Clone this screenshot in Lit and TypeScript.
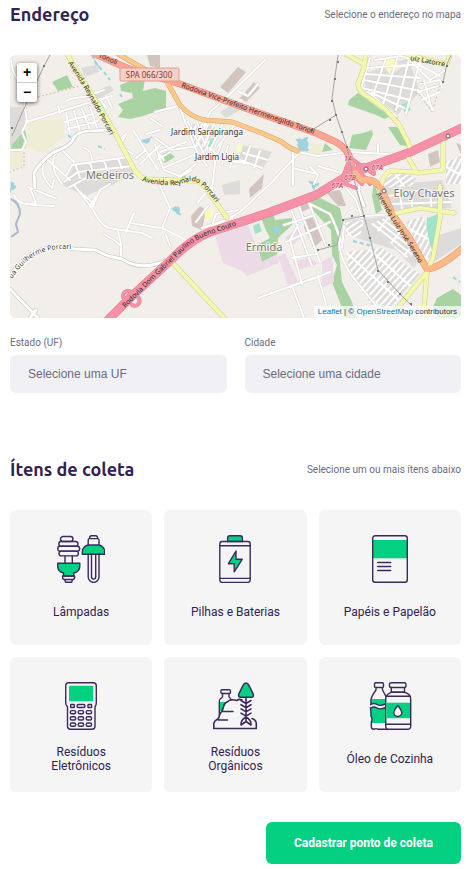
import { LitElement, html, svg, css } from "lit";
import { customElement, state } from "lit/decorators.js";
import { classMap } from "lit/directives/class-map.js";

type Shape = { kind: string; d: string };

const streets: Shape[] = [
  { kind: "street", d: "M26 122L62 111L88 103L112 96M66 101Q74 97 84 97L104 90M58 106L60 113" },
  { kind: "street", d: "M66 113L70 134M74 111L80 132M82 109L90 130M90 107L97 128M64 122L93 114M68 129L98 121M106 96L112 108M100 99L106 108" },
  { kind: "street", d: "M11 60Q12 72 18 80L24 100L27 122L22 132L26 142L22 150L10 150" },
  { kind: "street", d: "M48 157Q36 170 50 186M56 153Q48 166 62 184M48 160L70 180M62 150L74 162M84 148Q92 150 92 160M74 140L78 132" },
  { kind: "street", d: "M66 176L72 165L128 157M64 182L78 172L133 166M68 188L86 178M76 166L80 178M90 163L96 180M104 161L108 172M118 159L122 168M30 188L36 203L30 204M28 187L55 198M28 204Q18 204 14 195M32 205L54 206M52 188L54 180" },
  { kind: "street", d: "M116 143L126 134L120 146L133 154M133 130L158 170M146 150L136 158M150 118L162 126M140 164L160 145M146 134L160 130M158 153L164 160" },
  { kind: "street", d: "M155 112L178 106M180 108L196 150L207 166M188 122L206 158M197 122L204 142M206 124L196 146M214 124L204 146M222 125L210 150M218 146L237 122M216 154L212 190L225 218M155 138L172 150L197 146M160 152L186 142M155 145L163 168L196 154M157 160L170 152M164 170L180 176L196 164M178 178L192 170" },
  { kind: "street", d: "M265 60L226 98M238 91L248 96L258 84M210 148L222 160L252 164M222 142L216 158M228 146L222 164M234 152L230 168M243 153L268 160M240 160L262 168M250 146L244 164M260 151L254 168" },
  { kind: "street", d: "M160 186L170 208L162 228L190 242M166 235L170 246M155 264L172 258M198 202L212 186M196 236L222 222L240 212L270 184L300 152M208 236L216 214L238 210M196 222L208 206M202 228L232 218M226 98L210 112L204 126" },
  { kind: "street", d: "M74 185L92 208Q100 224 108 228L142 233L152 238M92 208L100 190L110 184M80 192L94 204M90 206L96 196M118 231L121 244L121 258M104 234L114 240L121 246M126 232L134 213M131 223L160 228" },
  { kind: "street", d: "M298 152L318 156L350 152L404 155M293 152L293 185M293 168L317 174M338 172L318 166M378 145L378 153M310 167L318 175L314 184" },
  { kind: "street", d: "M375 60L414 54M368 68L420 64M366 74L420 78M364 80L416 90M362 88L410 100M372 93L404 108M370 58L360 92M386 58L372 98M398 56L383 104M410 56L396 110M420 60L406 114M368 92L396 116M405 56L430 80L446 70M418 90L434 110M420 84L440 80L442 88M418 92L438 86M422 100L440 92M414 62L440 76M424 80L432 110" },
  { kind: "street", d: "M284 225L312 216M258 298L314 278M298 225L290 240L302 284M290 206L312 266M298 204L320 262M308 200L326 246M292 286L304 318M292 258L316 254M286 242L330 222M310 280L330 272M318 276L330 318M310 204L330 214Q336 226 342 244M346 188L356 200L362 218" },
  { kind: "street", d: "M344 220L366 216L392 214M340 236Q336 252 352 276L386 318M344 226L342 248M430 190L432 212M400 190L402 210M412 196L412 208M388 196L422 190M390 204L452 202" },
];

const localRoads: Shape[] = [
  { kind: "local", d: "M35 188L34 173Q40 162 54 152Q72 146 74 137Q80 130 95 131L114 129" },
  { kind: "local", d: "M63 247L74 249L95 250L108 256L122 259Q138 270 160 263L172 259" },
  { kind: "local", d: "M10 276Q24 254 46 248L63 247M10 289L38 318M30 318L36 310" },
  { kind: "local", d: "M362 176L358 190L364 206" },
];

const mainRoads: Shape[] = [
  { kind: "yellow", d: "M67 54L84 82L100 107L115 133L133 167Q138 177 146 179L196 181Q205 184 210 194L227 218" },
  { kind: "yellow", d: "M172 262L226 320" },
  { kind: "yellow", d: "M366 54L364 68L358 84Q358 92 370 98L384 108L398 123L408 142L411 150L406 154L417 173L443 170L443 143M346 54L362 63" },
  { kind: "yellow", d: "M380 190Q382 176 390 171L416 172" },
  { kind: "yellow", d: "M400 52Q424 60 447 64L450 54" },
  { kind: "yellow", d: "M392 214L420 208L454 213M440 186L440 218L433 258L427 272L388 320M427 272L423 320" },
  { kind: "orange", d: "M118 54L146 70M167 82L180 105Q190 117 205 120L232 122L262 133L282 142Q290 149 298 151" },
  { kind: "trunk", d: "M95 54L127 68L180 84L245 108L316 133L336 142Q350 150 351 164L355 177" },
  { kind: "motorway", d: "M106 322L133 295L172 259Q190 240 210 232L268 213L316 195L352 173L408 153L464 127" },
  { kind: "ramp", d: "M342 180L350 158L374 174M344 183Q362 170 370 184M350 166L366 178M340 182L356 188M358 166Q370 163 374 172M346 168L362 184M342 176L360 168" },
  { kind: "ramp", d: "M124 299a5 5 0 1 1 9 -3a5 5 0 1 1 -1 9" },
  { kind: "primary", d: "M355 173L362 180Q376 178 382 190L392 214L408 236L427 269Q440 268 464 247" },
];

const areas: Shape[] = [
  { kind: "wood", d: "M52 82L67 75L73 87L58 91ZM120 85L133 80L145 79L143 91L155 88L166 91L166 110L155 112L143 116L130 119L118 117L123 110L118 104L133 98L132 93L121 91ZM13 130L25 130L27 138L23 143L26 148L11 150Z" },
  { kind: "wood", d: "M158 157L168 151L175 157L165 163ZM349 100L358 93L390 116L385 119L376 115L348 105ZM388 127L397 127L412 147L400 145ZM349 148L352 135L363 133L372 130L373 134L366 150ZM322 152L325 143L333 150Z" },
  { kind: "wood", d: "M260 215L273 213L275 220L292 218L292 225L278 238L277 255L262 262L257 245L270 238L265 228ZM310 202L320 198L340 208L342 218L338 245L342 282L352 302L357 318L346 318L332 282L337 265L332 255L331 230L310 207ZM433 307L437 298L453 289L461 295V318H438Z" },
  { kind: "wood", d: "M374 180L382 210L376 214L372 196Z" },
  { kind: "farm", d: "M28 122L62 118L65 135L45 153L26 147ZM10 151L24 152L22 166L10 170ZM310 142L324 146L320 156L310 154Z" },
  { kind: "housing", d: "M81 68L97 65L99 72L85 77ZM85 97L110 85L114 90L97 100ZM10 107H25V130L10 147ZM220 112L232 105L240 110L226 118ZM62 185L74 166L130 157L136 172L112 185L86 196ZM243 145L272 152L262 170L238 160ZM345 221L392 216L424 248L414 268L396 250L350 236ZM376 186L442 180L452 208L392 212ZM436 236L461 228V244L434 262ZM222 185L240 180V194L224 195ZM364 74L408 58L420 92L398 114L366 90Z" },
  { kind: "industry", d: "M215 235L247 223L258 250L262 262L277 254L279 263L247 276L242 271L223 263ZM278 257L285 253L298 282L288 285ZM285 238L297 228L302 236L292 246ZM293 262L310 257L318 264L298 270ZM322 262L332 256L334 282L322 288Z" },
  { kind: "building", d: "M220 87L238 67L246 72L228 93ZM240 98L254 82L260 88L246 102ZM249 189L264 174L262 188L250 198ZM147 55H160V68L150 66ZM191 216L200 206L206 210L202 230L192 226ZM428 154L438 150L440 162L430 167ZM456 143L461 145V154ZM300 204L306 202L310 208L302 212ZM304 218L312 216L322 240L314 248L304 228ZM326 192L340 190L346 206L338 206ZM181 173L186 172V178H181Z" },
  { kind: "park", d: "M382 63L393 57L401 67L390 75ZM204 212L212 208L214 216L206 222ZM237 145L242 145V152L236 152Z" },
  { kind: "teal", d: "M401 105L407 102L411 110L405 113ZM253 226L259 223L262 231L255 234ZM208 140L215 137L214 147L206 147ZM427 218L438 214L434 252L426 240Z" },
  { kind: "water", d: "M92 55L96 64L102 70M104 72L110 80M120 94L122 97M68 135L72 139M98 146L105 149M142 140L146 144L152 137M11 182L16 186L10 192M297 140L307 138L308 150L300 152ZM310 182L318 184L314 189ZM353 241L372 246M390 260L402 273L404 268M453 277L460 282M173 209L178 206L180 214L175 212ZM274 229L280 226V231L276 234Z" },
];

const gridPatterns = [
  { id: "grid-a", angle: -35 },
  { id: "grid-b", angle: 38 },
  { id: "grid-c", angle: -48 },
  { id: "grid-d", angle: -62 },
];

const grids = [
  { id: "grid-a", d: "M346 222L364 220L360 238L346 236Z" },
  { id: "grid-b", d: "M370 224L390 216L424 250L406 258Z" },
  { id: "grid-c", d: "M346 252L382 248L402 262L420 274L392 308L380 316L350 276Z" },
  { id: "grid-d", d: "M406 222L424 216L432 254L426 262Z" },
  { id: "grid-a", d: "M386 176L400 171L416 178L412 186L380 188Z" },
  { id: "grid-d", d: "M446 162L461 156V184H446Z" },
  { id: "grid-d", d: "M188 124L216 124L206 152L194 146Z" },
];

const pathLabels = [
  { id: "name-reynaldo-north", cls: "road-name", d: "M68 63L84 88L99 115L114 142", text: "Avenida Reynaldo Porcari" },
  { id: "name-reynaldo-south", cls: "road-name", d: "M142 181Q160 186 176 185L190 181Q202 180 222 212", text: "Avenida Reynaldo Porcari" },
  { id: "name-vice", cls: "road-name", d: "M181 87L245 110L322 137", text: "Rodovia Vice-Prefeito Hermenegildo Tonoli" },
  { id: "name-tonoli", cls: "road-name", d: "M98 57L126 69", text: "Tonoli" },
  { id: "name-guilherme", cls: "street-name", d: "M12 279Q30 250 60 249L84 249", text: "ua Guilherme Porcari" },
  { id: "name-dom", cls: "road-name", d: "M125 308L155 278L176 258Q190 242 208 235L250 221", text: "Rodovia Dom Gabriel Paulino Bueno Couto" },
  { id: "name-luiz", cls: "road-name", d: "M376 194L390 218L406 242L424 272", text: "Avenida Luiz José Sereno" },
  { id: "name-latorre", cls: "road-name", d: "M410 60L452 68", text: "uiz Latorre" },
];

const powerLine =
  "M50 55L44 66L22 113L12 136M338 55L332 98L336 115L347 147L352 172L364 216L370 238L378 270L400 294L412 306M312 130L336 115M451 55L447 64L443 82M318 250L337 245L343 220L364 216";

const pylons = [
  [44, 66], [12, 128], [338, 62], [335, 79], [332, 101], [336, 115], [330, 120], [342, 132], [347, 147], [312, 130],
  [364, 216], [370, 238], [378, 271], [388, 282], [400, 294], [411, 304], [318, 250], [329, 245], [343, 220], [352, 216], [443, 82], [447, 66],
];

const mapPicture = svg`
  <svg class="tiles" viewBox="10 55 451 263" preserveAspectRatio="xMidYMid slice" role="img" aria-label="Mapa">
    <defs>
      ${gridPatterns.map(
        (p) => svg`<pattern id=${p.id} width="18" height="5" patternUnits="userSpaceOnUse" patternTransform="rotate(${p.angle})">
          <rect class="grid-ground" width="18" height="5"></rect>
          <path class="grid-street" d="M0 2H18M8 0V5"></path>
        </pattern>`
      )}
      ${pathLabels.map((l) => svg`<path id=${l.id} d=${l.d}></path>`)}
    </defs>
    <rect class="ground" x="10" y="55" width="451" height="263"></rect>
    ${areas.map((a) => svg`<path class="area ${a.kind}" d=${a.d}></path>`)}
    ${grids.map((g) => svg`<path fill="url(#${g.id})" d=${g.d}></path>`)}
    <path class="river" d="M11 199Q20 203 20 214L16 224L18 232L11 237"></path>
    <path class="track" d="M38 97L80 86M24 152L24 166L10 172M412 90L420 96L432 112L440 86M394 106L398 122L408 142"></path>
    ${[streets, localRoads, mainRoads].map(
      (group) => svg`
        ${group.map((r) => svg`<path class="road case ${r.kind}" d=${r.d}></path>`)}
        ${group.map((r) => svg`<path class="road ${r.kind}" d=${r.d}></path>`)}`
    )}
    <path class="power" d=${powerLine}></path>
    ${pylons.map(([x, y]) => svg`<rect class="pylon" x=${x - 1} y=${y - 1} width="2" height="2"></rect>`)}
    <circle class="junction" cx="448" cy="136" r="2"></circle>
    <circle class="junction" cx="366" cy="169" r="2"></circle>
    <circle class="junction" cx="384" cy="191" r="2"></circle>
    <rect class="shield" x="120" y="68" width="59" height="13" rx="1"></rect>
    <text class="shield-text" x="149" y="78">SPA 066/300</text>
    ${pathLabels.map((l) => svg`<text class=${l.cls}><textPath href="#${l.id}">${l.text}</textPath></text>`)}
    <text class="hood" x="207" y="135">Jardim Sarapiranga</text>
    <text class="hood" x="217" y="160">Jardim Ligia</text>
    <text class="district" x="110" y="179">Medeiros</text>
    <text class="district" x="264" y="251">Ermida</text>
    <text class="district" x="424" y="197">Eloy Chaves</text>
    <text class="exit" x="348" y="161">1A</text>
    <text class="exit" x="377" y="170">67A</text>
    <text class="exit" x="350" y="180">67B</text>
    <text class="exit" x="337" y="188">67A</text>
  </svg>`;

const icons = {
  lamp: svg`
    <rect x="3.5" y="1.5" width="12.5" height="5" rx="2.5"></rect>
    <rect x="1.8" y="6.5" width="19.2" height="4.8" rx="2.4"></rect>
    <rect x=".7" y="11.3" width="22" height="4.8" rx="2.4"></rect>
    <rect x="2" y="16.1" width="19.4" height="4.8" rx="2.4"></rect>
    <path d="M8 21V28M15.3 21V28"></path>
    <path class="fill" d="M.7 28.3H22.8V31C22.8 35 20 37.3 16.8 38V41H6.5V38C3.4 37.3.7 35 .7 31Z"></path>
    <path d="M5.6 41H17.6V42.5Q17.6 44.5 15.6 44.5H7.6Q5.6 44.5 5.6 42.5ZM7.6 44.5L8.6 47.3H14.6L15.6 44.5"></path>
    <path d="M31.2 10V5Q31.2 3.6 32.6 3.6H40.6Q42 3.6 42 5V10M32.6 3.6Q32.6.7 34.4.7H38.8Q40.6.7 40.6 3.6"></path>
    <path class="fill" d="M25.3 19.3V17C25.3 13 28.4 10 32 10H41C44.6 10 47.7 13 47.7 17V19.3Z"></path>
    <path d="M31.2 19.3V42a5.4 5.4 0 0 0 10.8 0V19.3M34.5 19.3V42a2.1 2.1 0 0 0 4.2 0V19.3"></path>`,
  battery: svg`
    <path class="fill" d="M16.6 6.5V3Q16.6.7 18.9.7H29.1Q31.4.7 31.4 3V6.5Z"></path>
    <rect x="8.8" y="6.5" width="30.4" height="40.9" rx="2.5"></rect>
    <path d="M8.8 10.7H39.2M8.8 43.4H39.2"></path>
    <path class="fill" d="M25 16L17.4 28.7H23.2V36.8L31.2 24.3H25Z"></path>`,
  paper: svg`
    <rect class="plain" x="7" y="5" width="34" height="18.3"></rect>
    <rect x="6.7" y=".7" width="34.6" height="46.6" rx="2.5"></rect>
    <path d="M11.7 27.5H24.7M11.7 31.5H24.7M11.7 35.5H24.7"></path>`,
  device: svg`
    <path d="M11.7.7H36.3Q39.3.7 39.3 3.7V21Q39.3 23 38 25V44.3Q38 47.3 35 47.3H13.5Q10.5 47.3 10.5 44.3V25Q8.7 23 8.7 21V3.7Q8.7.7 11.7.7Z"></path>
    <rect class="plain" x="12" y="3.7" width="24.2" height="15.6" rx="1"></rect>
    <rect x="13.7" y="22.5" width="3.6" height="3" rx=".5"></rect>
    <rect x="20" y="22.5" width="8" height="3" rx="1.5"></rect>
    <rect x="31" y="22.5" width="3.6" height="3" rx=".5"></rect>
    ${[28.6, 34.8, 41].map((y) => [13.3, 21.2, 29.2].map((x) => svg`<rect x=${x} y=${y} width="5.4" height="3.2" rx="1.5"></rect>`))}`,
  organic: svg`
    <path class="plain" d="M8.5 20H15L12 29H8.5Z"></path>
    <rect x="9.9" y="7.7" width="9.6" height="3.8" rx="1.2"></rect>
    <path d="M11.5 11.5V15Q8.300 17 8.3 20V33M18 11.5V15Q19.7 16 20.2 18"></path>
    <path class="heavy" d="M31 18Q28 16.5 26 18.5Q19 16.5 17 19.5Q13 21 12 26Q11.5 29 9 32L7.500 36.5Q2.8 39 2.8 42V46.5H45.3V42Q45.3 38 41 36.5M11.5 29.5H22M7.5 38H16.5"></path>
    <path class="fill heavy" d="M35 1Q36.8 1 38 3.5L42 11.5Q43.5 15.3 40 15.3H30Q26.5 15.3 28 11.5L32 3.5Q33.2 1 35 1Z"></path>
    <path class="heavy" d="M35 15.3V39M30 18.5L35 21.5L40 18.5M30 22.7L35 25.7L40 22.7M30 26.9L35 29.9L40 26.9M30 31.1L35 34.1L40 31.1M35 35Q29.5 38 30 43L35 39.5L40 43Q40.5 38 35 35"></path>`,
  oil: svg`
    <path class="plain" d="M5.5 17H19.7V41H6Q6.5 37 4.7 34V27L5 22Z"></path>
    <rect x="8.5" y=".7" width="9" height="4.8" rx="1.2"></rect>
    <path d="M10 5.5V8Q5.5 14 4.9 18V23Q3.8 26 4.9 29L5 34Q7 38 5.3 40V44.5Q5.3 47.3 8 47.3Q10 46 12 47.3H22M16.5 5.5V8L19.7 14"></path>
    <path class="gap" d="M5.5 24.3Q8 22.3 11 24.3T19 23.8"></path>
    <path d="M4.9 22.5Q8 20.5 11 22.5T19.5 22M4.9 26Q8 24 11 26T19.5 25.5"></path>
    <path class="jar" d="M25.3 10.3Q19.7 12 19.7 17V44Q19.7 47.3 23 47.3H41.5Q44.7 47.3 44.7 44V17Q44.7 12 38.5 10.3Z"></path>
    <rect class="plain" x="20.4" y="20.7" width="23.6" height="15.5"></rect>
    <rect x="23.5" y=".7" width="16.5" height="4.8" rx="1.5"></rect>
    <path d="M25.3 5.5V10.3H38.5V5.5M20.2 14.3H44.2M19.7 42.3H44.7"></path>
    <path class="jar" d="M31.8 23.5Q27.8 28.5 27.8 30.5A4 4 0 0 0 35.8 30.5Q35.8 28.5 31.8 23.5Z"></path>`,
};

const items = [
  { icon: icons.lamp, title: "Lâmpadas" },
  { icon: icons.battery, title: "Pilhas e Baterias" },
  { icon: icons.paper, title: "Papéis e Papelão" },
  { icon: icons.device, title: "Resíduos Eletrônicos" },
  { icon: icons.organic, title: "Resíduos Orgânicos" },
  { icon: icons.oil, title: "Óleo de Cozinha" },
];

@customElement("address-map")
export class AddressMap extends LitElement {
  static styles = css`
    :host { display: block; position: relative; overflow: hidden; border-radius: 6px; background: #f2efe9; }
    .tiles { display: block; width: 100%; height: auto; font-family: "Noto Sans", sans-serif; }
    .ground { fill: #f2efea; }
    .area { stroke: none; }
    .area.wood { fill: #a9d3a3; }
    .area.farm { fill: #edeed3; }
    .area.housing { fill: #dddcdb; }
    .area.industry { fill: #ecdae7; }
    .area.building { fill: #d2c5bf; }
    .area.park { fill: #fafabf; }
    .area.teal { fill: #a0e3cb; }
    .area.water { fill: #9fd3de; stroke: #9fd3de; stroke-width: 2; stroke-dasharray: 4 3; }
    .river { fill: none; stroke: #a9b8d0; stroke-width: 2; }
    .track { fill: none; stroke: #e3b88f; stroke-width: 1; stroke-dasharray: 2 2; }
    .grid-ground { fill: #dddcdb; }
    .grid-street { fill: none; stroke: #fff; stroke-width: 2; }
    .road { fill: none; stroke: #fff; stroke-width: 2; stroke-linejoin: round; stroke-linecap: round; }
    .road.case { stroke: #d6d4d1; stroke-width: 3; }
    .local { stroke-width: 3; }
    .local.case { stroke: #c4c2bf; stroke-width: 4; }
    .yellow { stroke: #f4f7ae; stroke-width: 4; }
    .yellow.case { stroke: #ccd090; stroke-width: 5; }
    .orange { stroke: #fbc88c; stroke-width: 4; }
    .orange.case { stroke: #dea264; stroke-width: 5; }
    .primary { stroke: #fbb98a; stroke-width: 6; }
    .primary.case { stroke: #e09a66; stroke-width: 7; }
    .trunk { stroke: #fba394; stroke-width: 6; }
    .trunk.case { stroke: #e98d7d; stroke-width: 7; }
    .motorway { stroke: #f491a6; stroke-width: 8; stroke-linecap: butt; }
    .motorway.case { stroke: #e97f97; stroke-width: 9; stroke-linecap: butt; }
    .ramp { stroke: #f491a6; stroke-width: 3; }
    .ramp.case { stroke: #e97f97; stroke-width: 4; }
    .power { fill: none; stroke: #a5a3a1; stroke-width: 1; }
    .pylon { fill: #77777a; }
    .junction { fill: #eee; stroke: #666; }
    .shield { fill: #f7cfc7; stroke: #dd9c92; }
    .shield-text { fill: #863a38; font-size: 8px; text-anchor: middle; }
    .road-name { fill: #2c2a22; font-size: 7px; }
    .street-name { fill: #333; font-size: 7px; paint-order: stroke; stroke: #fff; stroke-width: 2; }
    .hood { fill: #333; font-size: 8px; text-anchor: middle; paint-order: stroke; stroke: #f7f5f2; stroke-width: 2; }
    .district { fill: #777; font-size: 11px; text-anchor: middle; paint-order: stroke; stroke: #f7f5f2; stroke-width: 2; }
    .exit { fill: #b4324c; font-size: 7px; font-style: italic; text-anchor: middle; paint-order: stroke; stroke: #f8d5dc; stroke-width: 1; }
    .zoom { position: absolute; top: 8px; left: 7px; display: flex; flex-direction: column; width: 20px; border-radius: 3px; background: #fff; box-shadow: 0 1px 4px rgba(0, 0, 0, 0.65); }
    .zoom button { height: 19px; padding: 0; border: 0; background: none; color: #000; font: bold 14px/19px "Liberation Sans", Arial, sans-serif; }
    .zoom button + button { height: 20px; border-top: 1px solid #ccc; }
    .credit { position: absolute; right: 0; bottom: 0; padding: 0 4px; background: rgba(255, 255, 255, 0.7); color: #333; font: 8px/12px "Liberation Sans", Arial, sans-serif; white-space: nowrap; }
    .credit a { color: #0078a8; text-decoration: none; }
  `;

  render() {
    return html`
      ${mapPicture}
      <div class="zoom">
        <button type="button" aria-label="Aproximar">+</button>
        <button type="button" aria-label="Afastar">−</button>
      </div>
      <div class="credit"><a href="#leaflet">Leaflet</a> | © <a href="#osm">OpenStreetMap</a> contributors</div>
    `;
  }
}

@customElement("app-root")
export class AppRoot extends LitElement {
  static styles = css`
    :host { display: block; color: #322153; font-family: Roboto, sans-serif; }
    * { box-sizing: border-box; }
    form { padding: 0 11px 5px 10px; }
    section + section { margin-top: 62px; }
    .heading { display: flex; align-items: center; justify-content: space-between; height: 29px; margin-bottom: 26px; }
    h2 { margin: 0; font: bold 18px/29px Ubuntu, "Noto Sans", sans-serif; }
    .hint, label { color: #6c6c80; font-size: 10px; line-height: 13px; }
    .fields { display: flex; gap: 18px; margin-top: 18px; }
    .field { display: flex; flex: 1; flex-direction: column; gap: 6px; min-width: 0; }
    select { appearance: none; width: 100%; height: 38px; padding: 0 18px; border: 0; border-radius: 6px; background: #f0f0f5; color: #6c6c80; font: 12px "Liberation Sans", Arial, sans-serif; }
    .items { display: grid; grid-template-columns: repeat(3, 1fr); gap: 12px; margin: 0; padding: 0; list-style: none; }
    .item { display: flex; flex-direction: column; align-items: center; width: 100%; height: 135px; padding: 25px 18px 13px; border: 0; border-radius: 6px; background: #f5f5f5; color: #322153; font: 12px/14px Roboto, sans-serif; cursor: pointer; }
    .item.selected { background: #e1faec; box-shadow: inset 0 0 0 2px #34cb79; }
    .item svg { flex: none; fill: none; stroke: #3b2a5c; stroke-width: 1.4; stroke-linejoin: round; stroke-linecap: round; }
    .item .fill { fill: #04d082; }
    .item .plain { fill: #04d082; stroke: none; }
    .item .heavy { stroke-width: 1.6; }
    .item .jar { fill: #f5f5f5; }
    .item .gap { stroke: #f5f5f5; stroke-width: 3; }
    .name { display: flex; flex: 1; align-items: center; margin-top: 9px; max-width: 92px; text-align: center; }
    .actions { display: flex; justify-content: flex-end; margin-top: 30px; }
    .submit { width: 195px; height: 42px; padding: 0; border: 0; border-radius: 6px; background: #04d082; color: #fff; font: bold 12px Roboto, sans-serif; cursor: pointer; }
  `;

  @state() private selected: number[] = [];

  private toggle(index: number) {
    this.selected = this.selected.includes(index)
      ? this.selected.filter((i) => i !== index)
      : [...this.selected, index];
  }

  render() {
    return html`
      <form @submit=${(e: Event) => e.preventDefault()}>
        <section>
          <div class="heading">
            <h2>Endereço</h2>
            <span class="hint">Selecione o endereço no mapa</span>
          </div>
          <address-map></address-map>
          <div class="fields">
            <div class="field">
              <label for="uf">Estado (UF)</label>
              <select id="uf"><option>Selecione uma UF</option></select>
            </div>
            <div class="field">
              <label for="city">Cidade</label>
              <select id="city"><option>Selecione uma cidade</option></select>
            </div>
          </div>
        </section>
        <section>
          <div class="heading">
            <h2>Ítens de coleta</h2>
            <span class="hint">Selecione um ou mais ítens abaixo</span>
          </div>
          <ul class="items">
            ${items.map((item, i) => {
              const on = this.selected.includes(i);
              return html`<li>
                <button type="button" class=${classMap({ item: true, selected: on })} aria-pressed=${on ? "true" : "false"} @click=${() => this.toggle(i)}>
                  <svg width="48" height="48" viewBox="0 0 48 48" aria-hidden="true">${item.icon}</svg>
                  <span class="name">${item.title}</span>
                </button>
              </li>`;
            })}
          </ul>
        </section>
        <div class="actions"><button class="submit" type="submit">Cadastrar ponto de coleta</button></div>
      </form>
    `;
  }
}
